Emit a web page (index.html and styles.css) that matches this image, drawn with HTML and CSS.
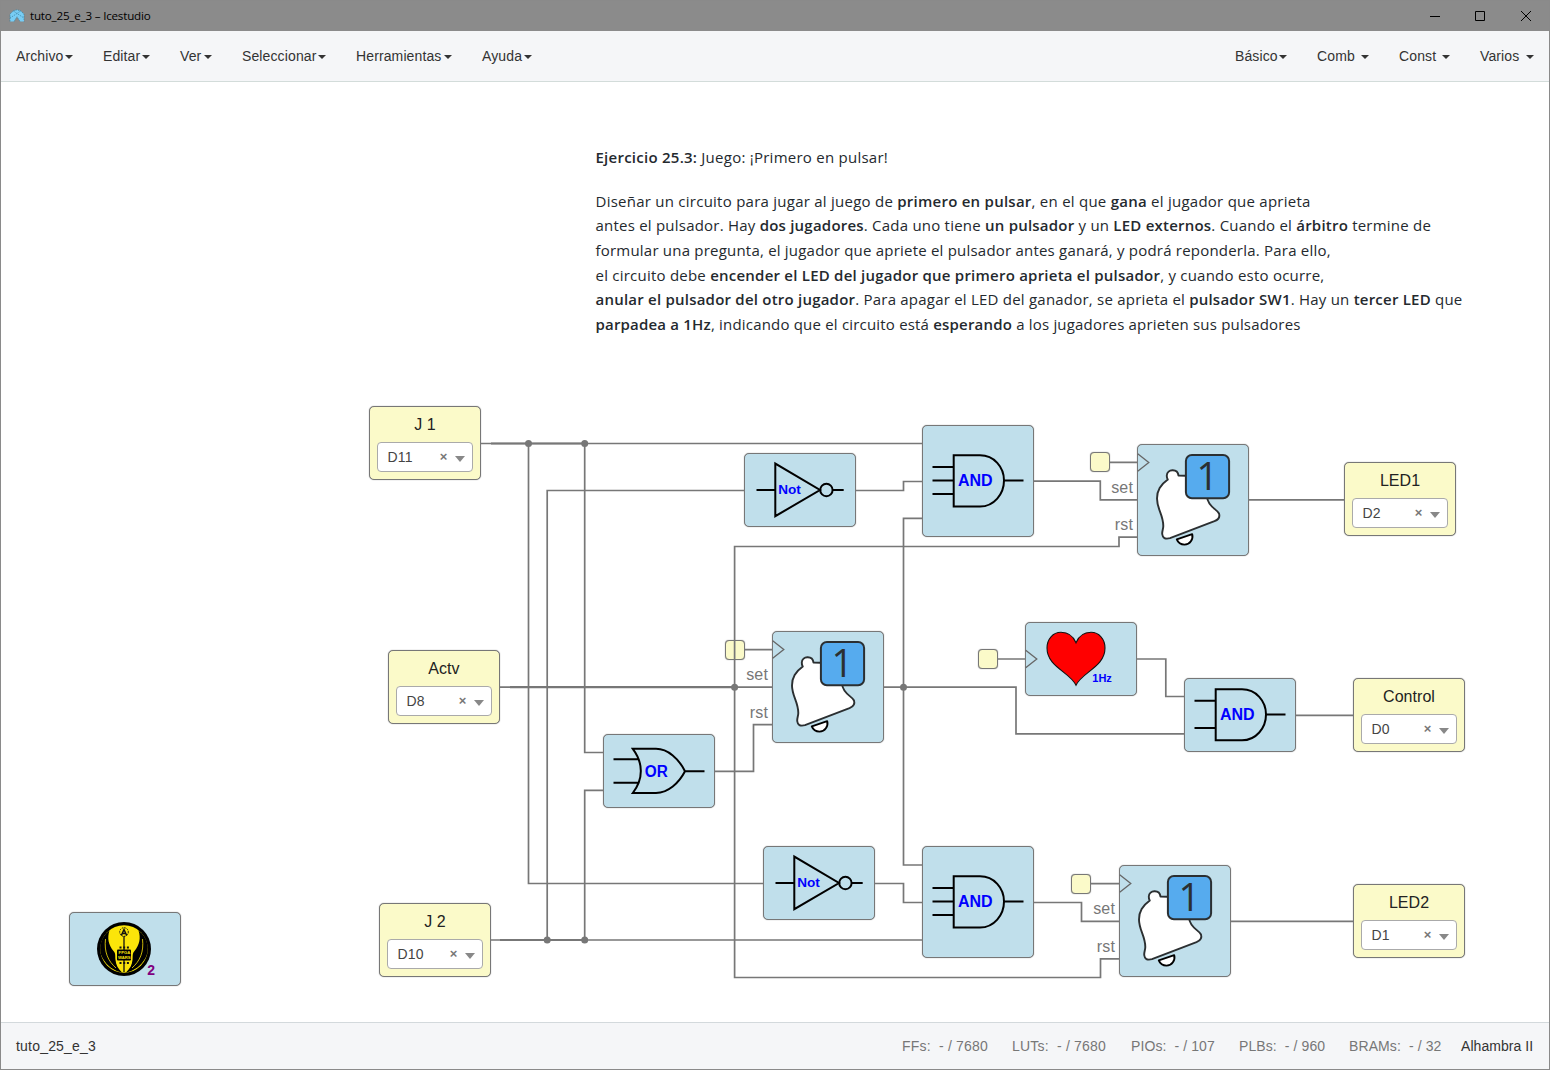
FILE: index.html
```html
<!DOCTYPE html>
<html lang="es">
<head>
<meta charset="utf-8">
<title>tuto_25_e_3 – Icestudio</title>
<link rel="stylesheet" href="styles.css">
</head>
<body>
<svg class="defs" width="0" height="0" aria-hidden="true">
  <symbol id="not" viewBox="0 0 112 74">
    <path class="gate" d="M12.5 37H31.3M31.3 10.6V63.2L76 37ZM89 37H99.7"/><circle class="gate" cx="82.4" cy="37" r="6.2"/>
  </symbol>
  <symbol id="and3" viewBox="0 0 112 112">
    <path class="gate" d="M10.5 42H31.7M10.5 55.4H31.7M10.5 69H31.7M31.7 30.3H58C72 30.3 82 42 82 55.5S72 81.5 58 81.5H31.7ZM82 55.5H101.5"/>
  </symbol>
  <symbol id="bell" viewBox="0 0 112 112">
    <path class="bell" d="M48.7 31.7L41.5 31.5C40.5 24 30 25 29.8 31.5C29.7 33 29.9 34 30.8 35.6C23.5 41 20 46 20 54.5C20 65 26.3 71 26.3 82C26.3 85 25 87 25.2 90C25.6 94 28 95.4 33 94.2L77.5 77.2C81.5 75.5 83 72.5 82 69.5C80 65 71 63 70 53Z"/>
    <path class="clapper" d="M39.8 95.4L55.2 90.2C56.5 95 53 100.6 47.5 100.6C44 100.6 41 98.5 39.8 95.4Z"/>
    <rect class="badge" x="48.9" y="11" width="43.2" height="43.2" rx="6"/>
    <path class="clk" d="M.7 9.8L11.8 18.5L.7 27.3"/>
  </symbol>
</svg>

<div class="window">
  <header class="titlebar">
    <svg class="app-icon" viewBox="0 0 16 14"><path d="M1 5L4.5 1.8L8 .8L11.5 1.8L15 5V12.5H11L8 7.8L5 12.5H1Z" fill="#78cdf5"/><path d="M1 12.5V5L4.5 1.8L8 .8L11.5 1.8L15 5V12.5M1 9L8 4.5L15 9M5 12.5L8 7.8L11 12.5M4.5 2L8 4.5L11.5 2" fill="none" stroke="#387e9e" stroke-width=".7" stroke-dasharray="1.4 1"/></svg>
    <span class="title">tuto_25_e_3 – Icestudio</span>
    <svg class="win-buttons" viewBox="0 0 102 12"><path d="M0 6.5H10M45.5 1.5H54.5V10.5H45.5ZM91 1L101 11M101 1L91 11"/></svg>
  </header>

  <nav class="navbar">
    <ul class="menu">
      <li class="m-archivo">Archivo<i class="caret"></i></li><li class="m-editar">Editar<i class="caret"></i></li><li class="m-ver">Ver<i class="caret"></i></li><li class="m-sel">Seleccionar<i class="caret"></i></li><li class="m-herr">Herramientas<i class="caret"></i></li><li class="m-ayuda">Ayuda<i class="caret"></i></li>
    </ul>
    <ul class="menu">
      <li class="m-basico">Básico<i class="caret"></i></li><li class="m-comb">Comb<i class="caret"></i></li><li class="m-const">Const<i class="caret"></i></li><li class="m-varios">Varios<i class="caret"></i></li>
    </ul>
  </nav>

  <main class="canvas">
    <article class="note">
      <p><span class="line l0"><b>Ejercicio 25.3:</b> Juego: ¡Primero en pulsar!</span></p>
      <p>
        <span class="line l1">Diseñar un circuito para jugar al juego de <b>primero en pulsar</b>, en el que <b>gana</b> el jugador que aprieta</span>
        <span class="line l2">antes el pulsador. Hay <b>dos jugadores</b>. Cada uno tiene <b>un pulsador</b> y un <b>LED externos</b>. Cuando el <b>árbitro</b> termine de</span>
        <span class="line l3">formular una pregunta, el jugador que apriete el pulsador antes ganará, y podrá reponderla. Para ello,</span>
        <span class="line l4">el circuito debe <b>encender el LED del jugador que primero aprieta el pulsador</b>, y cuando esto ocurre,</span>
        <span class="line l5"><b>anular el pulsador del otro jugador</b>. Para apagar el LED del ganador, se aprieta el <b>pulsador SW1</b>. Hay un <b>tercer LED</b> que</span>
        <span class="line l6"><b>parpadea a 1Hz</b>, indicando que el circuito está <b>esperando</b> a los jugadores aprieten sus pulsadores</span>
      </p>
    </article>

    <div class="block io j1"><span class="name">J 1</span><div class="select"><span>D11</span><i class="clear">×</i><i class="arrow"></i></div></div>
    <div class="block io actv"><span class="name">Actv</span><div class="select"><span>D8</span><i class="clear">×</i><i class="arrow"></i></div></div>
    <div class="block io j2"><span class="name">J 2</span><div class="select"><span>D10</span><i class="clear">×</i><i class="arrow"></i></div></div>
    <div class="block io led1"><span class="name">LED1</span><div class="select"><span>D2</span><i class="clear">×</i><i class="arrow"></i></div></div>
    <div class="block io control"><span class="name">Control</span><div class="select"><span>D0</span><i class="clear">×</i><i class="arrow"></i></div></div>
    <div class="block io led2"><span class="name">LED2</span><div class="select"><span>D1</span><i class="clear">×</i><i class="arrow"></i></div></div>

    <div class="block not-a"><svg><use href="#not"/><text class="gate-text t-not" x="34.3" y="41" textLength="22.6" lengthAdjust="spacingAndGlyphs">Not</text></svg></div>
    <div class="block not-b"><svg><use href="#not"/><text class="gate-text t-not" x="34.3" y="41" textLength="22.6" lengthAdjust="spacingAndGlyphs">Not</text></svg></div>
    <div class="block tall and-a"><svg><use href="#and3"/><text class="gate-text" x="36" y="60.8">AND</text></svg></div>
    <div class="block tall and-b"><svg><use href="#and3"/><text class="gate-text" x="36" y="60.8">AND</text></svg></div>
    <div class="block and-c"><svg><path class="gate" d="M10.5 22.7H31.7M10.5 50H31.7M31.7 11.3H58C72 11.3 82 23 82 36.5S72 62.3 58 62.3H31.7ZM82 36.5H101.5"/><text class="gate-text" x="36" y="42">AND</text></svg></div>
    <div class="block or-a"><svg><path class="gate" d="M10.5 25.2H35.5M10.5 48.7H35.5M29.8 14.8H53C65 14.8 76 25 82 37.3C76 49 65 59 53 59H29.8C40.5 45 40.5 29 29.8 14.8ZM82 37.3H101.5"/><text class="gate-text" x="41.8" y="42.6" textLength="23" lengthAdjust="spacingAndGlyphs">OR</text></svg></div>
    <div class="block tall bell-a"><svg><use href="#bell"/><text class="badge-text" x="70.3" y="46" text-anchor="middle">1</text></svg><span class="port set">set</span><span class="port rst">rst</span></div>
    <div class="block tall bell-b"><svg><use href="#bell"/><text class="badge-text" x="70.3" y="46" text-anchor="middle">1</text></svg><span class="port set">set</span><span class="port rst">rst</span></div>
    <div class="block tall bell-c"><svg><use href="#bell"/><text class="badge-text" x="70.3" y="46" text-anchor="middle">1</text></svg><span class="port set">set</span><span class="port rst">rst</span></div>
    <div class="block heart"><svg viewBox="0 0 112 74">
      <path d="M51 20.8C48 13.5 42 10.3 36 10.3C28 10.3 22 17 22 26C22 45 45 50 51 63.2C57 50 80 45 80 26C80 17 74 10.3 66 10.3C60 10.3 54 13.5 51 20.8Z" fill="#f00" stroke="#111" stroke-width="1.1"/>
      <path class="clk" d="M.7 28.3L11.8 37L.7 45.8"/>
      <text class="gate-text t-hz" x="67.3" y="59.8">1Hz</text></svg></div>
    <div class="block logo"><svg viewBox="0 0 112 74">
      <circle cx="55" cy="37" r="27"/><circle cx="55" cy="37" r="23.7" fill="#fbe50a"/>
      <path d="M40.5 18.500C31 25 29 38 33.500 46C38 54 45 59 53 60.500C49 56.500 47 53 46.500 48C46 44 47 42 44.500 39C39.500 33 38 26 40.500 18.500ZM69.500 18.500C79 25 81 38 76.500 46C72 54 65 59 57 60.500C61 56.500 63 53 63.500 48C64 44 63 42 65.500 39C70.500 33 72 26 69.500 18.500Z"/>
      <path d="M36.500 27C35 40 39 49 47 56M73.500 27C75 40 71 49 63 56" fill="none" stroke="#fbe50a" stroke-width=".8"/>
      <path d="M55 24V60" stroke="#111" stroke-width="1.3"/><circle cx="55" cy="20" r="4.300" fill="none" stroke="#111" stroke-width="1" stroke-dasharray="1.5 1"/>
      <path d="M52.300 23.500L55 17.500L57.700 23.500M53.500 21.500H56.500" fill="none" stroke="#111" stroke-width="1.5"/>
      <path d="M50.500 35.500H60M50.500 51H60" stroke="#111" stroke-width="2.200" stroke-dasharray="2 1.700"/>
      <rect x="48" y="37.500" width="14" height="11" rx="1"/>
      <text class="tiny" x="49.600" y="42.200">FPGA</text><text class="tiny" x="49" y="47.400">WARS</text>
      <text class="two" x="78.300" y="62.800">2</text></svg></div>
    <i class="block clock clk-a"></i><i class="block clock clk-b"></i><i class="block clock clk-c"></i><i class="block clock clk-d"></i>

    <svg class="wires" viewBox="1 82 1548 940">
      <path d="M481 443.5H922M528.5 443.5V883.5H763M584.7 443.5V752.5H603M547.2 940V490.5H744M856 490.5H903.5V481.5H922M922 518.3H903.5V865H922M491 940H922M584.7 940V790.3H603M715 771.3H753.5V724.7H772M500 687.2H772M734.6 687V546.5H1119V537.2H1137M734.6 687V977.5H1100.5V958.8H1119M884 687.2H1016V733.8H1184M1034 481.2H1100.3V499.8H1137M1249 499.8H1344M1137 659H1165.8V696.5H1184M1296 715.3H1353M875 883.5H903.5V902.5H922M1034 902.5H1081.5V921.3H1119M1231 921.3H1353M1110 462.3H1137M745 649.6H772M998 659H1025M1091 883.7H1119"/>
      <path class="bus" d="M491 443.5H584M510 687.2H734M500 940H584"/>
      <g><circle cx="528.5" cy="443.5" r="3.5"/><circle cx="584.7" cy="443.5" r="3.5"/><circle cx="734.6" cy="687.2" r="3.5"/><circle cx="903.5" cy="687.2" r="3.5"/><circle cx="547.2" cy="940" r="3.5"/><circle cx="584.7" cy="940" r="3.5"/></g>
    </svg>
  </main>

  <footer class="footer">
    <span class="project">tuto_25_e_3</span>
    <div class="stats"><span class="s1">FFs:&nbsp; - / 7680</span><span class="s2">LUTs:&nbsp; - / 7680</span><span class="s3">PIOs:&nbsp; - / 107</span><span class="s4">PLBs:&nbsp; - / 960</span><span class="s5">BRAMs:&nbsp; - / 32</span><span class="board">Alhambra II</span></div>
  </footer>
</div>
</body>
</html>
```
FILE: styles.css
```css
* { box-sizing: border-box; }
body { margin: 0; font-family: "Liberation Sans", Arial, sans-serif; font-size: 14px; color: #333; }
.defs { position: absolute; }
.window { width: 1550px; height: 1070px; border: 1px solid #8a8a8a; display: flex; flex-direction: column; background: #fff; overflow: hidden; }

.titlebar { height: 30px; flex: none; background: #8b8b8b; display: flex; align-items: center; padding: 0 17px 0 8px; color: #000; }
.app-icon { width: 16px; height: 14px; margin-right: 5px; }
.title { font: 11.6px/30px "Open Sans", "Noto Sans", sans-serif; letter-spacing: -.19px; flex: 1; }
.win-buttons { width: 102px; height: 12px; fill: none; stroke: #000; stroke-width: 1; }

.navbar { height: 51px; flex: none; background: #f5f6f8; border-bottom: 1px solid #d3dcda; display: flex; justify-content: space-between; }
.menu { list-style: none; margin: 0; padding: 0 15px; display: flex; gap: 30px; }
.menu li { display: flex; align-items: center; justify-content: space-between; line-height: 50px; letter-spacing: .12px; white-space: nowrap; }
.caret { border: 4px solid transparent; border-top-color: #333; border-bottom: 0; margin-top: 2px; }
.m-archivo { width: 57px; } .m-editar { width: 47px; } .m-ver { width: 32px; } .m-sel { width: 84px; } .m-herr { width: 96px; } .m-ayuda { width: 50px; }
.m-basico, .m-comb { width: 52px; } .m-const { width: 51px; } .m-varios { width: 54px; }

.canvas { position: relative; height: 940px; flex: none; background: #fff; }
.note { padding: 62.5px 0 0 594.5px; font: 15px/24.6px "Open Sans", "Noto Sans", sans-serif; color: #24292e; }
.note p { margin: 0 0 19.7px; }
.note b { font-weight: 600; }
.line { display: block; width: max-content; white-space: nowrap; letter-spacing: .22px; }
.l0, .l1 { letter-spacing: .25px; }
.l3 { letter-spacing: .21px; }
.l4 { letter-spacing: .23px; }
.l6 { letter-spacing: .19px; }

.block { position: absolute; width: 112px; height: 74px; background: #c0dfeb; border: 1px solid #777; border-radius: 5px; box-shadow: 0 0 1px #777; }
.block.tall { height: 112px; }
.block > svg { position: absolute; left: -1px; top: -1px; width: 112px; height: 74px; overflow: visible; }
.block.tall > svg { height: 112px; }
.block.io { background: #fbfac9; padding: 9px 7px 0; text-align: center; }
.name { display: block; font-size: 16px; line-height: 18px; color: #222; letter-spacing: .05px; }
.select { margin-top: 8px; height: 30px; border: 1px solid #aaa; border-radius: 4px; background: #fff; display: flex; align-items: center; padding: 0 7px 0 9.5px; color: #444; letter-spacing: .2px; }
.select span { flex: 1; text-align: left; }
.clear { font: bold 13px "Liberation Sans", Arial, sans-serif; color: #777; margin: -1px 7.5px 0 0; }
.arrow { border: 5px solid transparent; border-top: 6px solid #888; border-bottom: 0; margin-top: 3px; }
.block.clock { width: 20px; height: 20px; background: #fbfac9; border-radius: 4px; }
.port { position: absolute; right: 115px; font-size: 16px; line-height: 18px; color: #777; letter-spacing: .15px; }
.set { top: 34px; } .rst { top: 71px; }
.bell-b .rst, .bell-c .rst { top: 72px; }

.j1 { left: 368px; top: 324px; } .actv { left: 387px; top: 568px; } .j2 { left: 378px; top: 821px; }
.led1 { left: 1343px; top: 380px; } .control { left: 1352px; top: 596px; } .led2 { left: 1352px; top: 802px; }
.not-a { left: 743px; top: 371px; } .not-b { left: 762px; top: 764px; }
.and-a { left: 921px; top: 343px; } .and-b { left: 921px; top: 764px; } .and-c { left: 1183px; top: 596px; }
.or-a { left: 602px; top: 652px; }
.bell-a { left: 1136px; top: 362px; } .bell-b { left: 771px; top: 549px; } .bell-c { left: 1118px; top: 783px; }
.heart { left: 1024px; top: 540px; } .logo { left: 68px; top: 830px; }
.clk-a { left: 1089px; top: 370px; } .clk-b { left: 724px; top: 558px; } .clk-c { left: 977px; top: 567px; } .clk-d { left: 1070px; top: 792px; }

.gate { fill: none; stroke: #000; stroke-width: 2; }
.gate-text { font: bold 16px "Liberation Sans", Arial, sans-serif; fill: #00f; }
.t-not { font-size: 13.6px; }
.t-hz { font-size: 11px; }
.bell { fill: #fff; stroke: #2b2f31; stroke-width: 1.9; stroke-linejoin: round; }
.clapper { fill: #fff; stroke: #000; stroke-width: 1.9; stroke-linejoin: round; }
.badge { fill: #56abee; stroke: #2b2f31; stroke-width: 2; }
.badge-text { font: 38px "Open Sans", "Noto Sans", sans-serif; fill: #2b2f31; }
.clk { fill: none; stroke: #666; stroke-width: 1.3; }
.tiny { font: bold 4.2px "Liberation Sans", Arial, sans-serif; fill: #fbe50a; }
.two { font: bold 14px "Liberation Sans", Arial, sans-serif; fill: #800080; }

.wires { position: absolute; left: 0; top: 0; width: 1548px; height: 940px; fill: none; stroke: #777; stroke-width: 1.7; pointer-events: none; }
.wires .bus { stroke-width: 2.2; }
.wires g { fill: #777; stroke: none; }

.footer { flex: 1; background: #f5f6f8; border-top: 1px solid #d3d9dc; display: flex; justify-content: space-between; align-items: center; padding: 0 15px; }
.stats { display: flex; gap: 24px; color: #777; white-space: nowrap; letter-spacing: .1px; }
.s1, .s2 { letter-spacing: .2px; }
.s1 { width: 86px; } .s2 { width: 95px; } .s3 { width: 84px; } .s4 { width: 86px; } .s5 { width: 92px; }
.board { color: #333; margin-left: -4px; width: 73px; letter-spacing: .05px; }
.project { letter-spacing: .2px; }
```
